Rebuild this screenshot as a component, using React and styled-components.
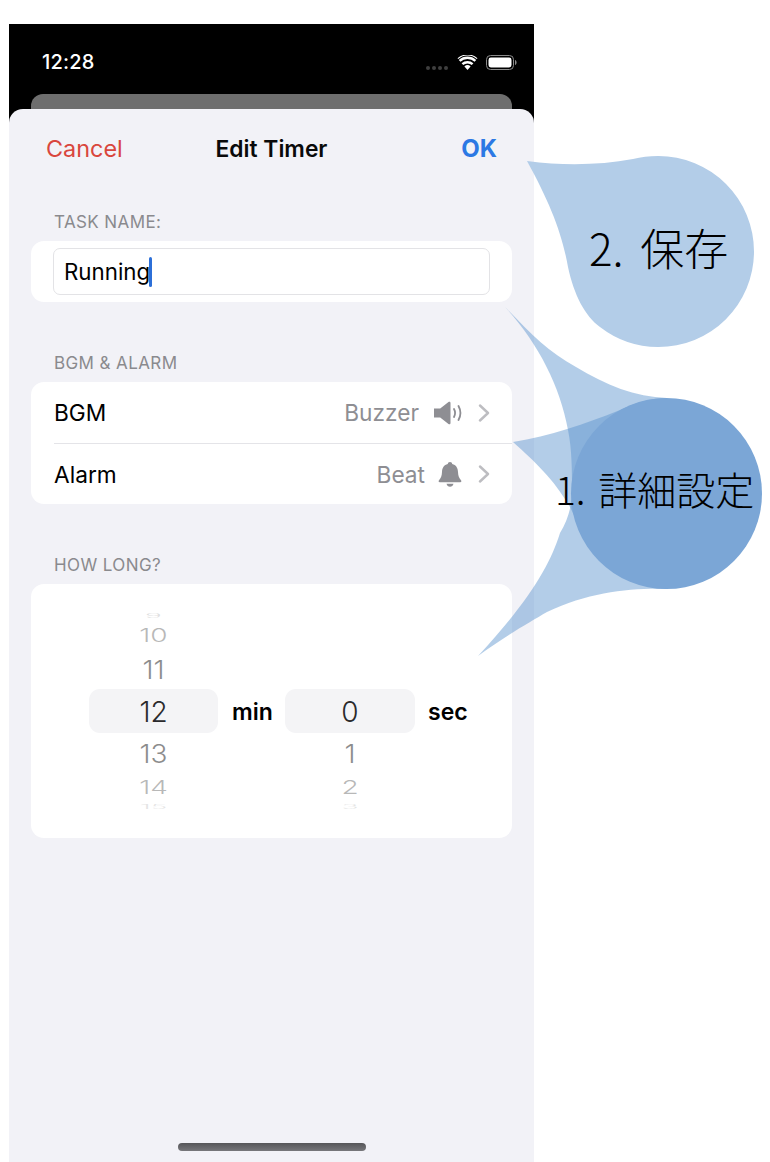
import React from 'react'
import styled, { createGlobalStyle } from 'styled-components'

const GlobalStyle = createGlobalStyle`
    html, body {
        margin: 0;
        padding: 0;
        background: #fff;
    }
    body {
        font-family: Inter, "Noto Sans", sans-serif;
        color: #000;
    }
`

const Page = styled.div`
    position: relative;
    width: 770px;
    height: 1162px;
    padding: 24px 0 0 9px;
    box-sizing: border-box;
    overflow: hidden;
`

const Phone = styled.div`
    width: 525px;
    height: 1138px;
    background: #000;
    display: flex;
    flex-direction: column;
`

const StatusBar = styled.div`
    height: 70px;
    flex: none;
    padding: 6px 17px 0 33px;
    box-sizing: border-box;
    display: flex;
    align-items: center;
    color: #fff;
`

const Time = styled.div`
    font-size: 20px;
    font-weight: 500;
    letter-spacing: 0.2px;
    margin-right: auto;
`

const Dots = styled.div`
    display: flex;
    gap: 2px;
    margin: 11px 9px 0 0;
`

const Dot = styled.span`
    width: 4px;
    height: 4px;
    border-radius: 50%;
    background: #3f3f3f;
`

const BackCard = styled.div`
    height: 15px;
    flex: none;
    margin: 0 22px;
    background: #6e6e6e;
    border-radius: 12px 12px 0 0;
`

const Sheet = styled.div`
    flex: 1;
    background: #f2f2f7;
    border-radius: 14px 14px 0 0;
    display: flex;
    flex-direction: column;
    padding: 0 22px;
`

const Header = styled.div`
    height: 78px;
    flex: none;
    display: grid;
    grid-template-columns: 1fr auto 1fr;
    align-items: center;
    padding: 0 15px;
`

const Cancel = styled.div`
    font-size: 23.4px;
    color: #d9463d;
`

const Title = styled.div`
    font-size: 22.8px;
    font-weight: 600;
    color: #0a0a0a;
`

const Ok = styled.div`
    font-size: 24px;
    font-weight: 700;
    color: #2c79e4;
    text-align: right;
`

const SectionLabel = styled.div`
    height: 20px;
    line-height: 22px;
    padding-left: 23px;
    margin: ${props => props.$top}px 0 10px;
    font-size: 17px;
    color: #8a8a8e;
    letter-spacing: 0.4px;
`

const Card = styled.div`
    background: #fff;
    border-radius: 13px;
`

const InputCard = styled(Card)`
    height: 61px;
    padding: 7px 22px;
    box-sizing: border-box;
`

const Input = styled.div`
    height: 47px;
    border: 1px solid #e3e3e6;
    border-radius: 7px;
    box-sizing: border-box;
    padding-left: 10px;
    display: flex;
    align-items: center;
    font-size: 22.3px;
`

const Caret = styled.span`
    width: 3px;
    height: 30px;
    margin-left: -1px;
    border-radius: 1.5px;
    background: #2c6fd8;
`

const Row = styled.div`
    height: 61px;
    margin-left: 23px;
    padding-right: 22px;
    box-sizing: border-box;
    display: flex;
    align-items: center;
    font-size: 22.7px;
    border-top: ${props => (props.$divided ? '1px solid #e4e4e8' : 'none')};
`

const RowName = styled.div`
    margin-right: auto;
`

const RowValue = styled.div`
    color: #8e8e93;
    margin-right: ${props => props.$gap}px;
`

const RowIcon = styled.svg`
    display: block;
    margin-right: 16px;
`

const PickerCard = styled(Card)`
    height: 254px;
    padding: 25px 0 0 58px;
    box-sizing: border-box;
    display: grid;
    grid-template-columns: 129px 67px 130px auto;
    grid-template-rows: 204px;
`

const Wheel = styled.div`
    display: flex;
    flex-direction: column;
`

const WheelItem = styled.div`
    height: ${props => props.$height}px;
    flex: none;
    display: flex;
    align-items: center;
    justify-content: center;
    overflow: hidden;
    font-size: 28px;
    border-radius: 11px;
    background: ${props => (props.$selected ? '#f4f4f6' : 'transparent')};
    color: ${props => (props.$selected ? '#2a2a2c' : '#000')};
`

const WheelText = styled.span`
    display: block;
    font-weight: 300;
    transform: translateY(${props => props.$shift || 0}px) scaleY(${props => props.$squash});
    opacity: ${props => props.$fade};
`

const Unit = styled.div`
    align-self: center;
    margin-top: 2px;
    padding-left: ${props => props.$indent}px;
    font-size: 23px;
    font-weight: 600;
`

const HomeBar = styled.div`
    margin: auto 0 11px 147px;
    width: 188px;
    height: 8px;
    border-radius: 4px;
    background: linear-gradient(#565659, #77777b);
`

const CalloutLayer = styled.svg`
    position: absolute;
    left: 0;
    top: 0;
    pointer-events: none;
`

const CalloutText = styled.div`
    position: absolute;
    left: ${props => props.$left}px;
    top: ${props => props.$top}px;
    font-family: "Noto Sans CJK JP", sans-serif;
    font-weight: 300;
    font-size: ${props => props.$size}px;
    word-spacing: ${props => props.$wordGap}px;
    line-height: 1;
    white-space: nowrap;
    color: #000;
`

const minutes = [
    { text: '9', height: 14, squash: 0.2, fade: 0.12 },
    { text: '10', height: 24, squash: 0.66, fade: 0.28 },
    { text: '11', height: 42, squash: 0.92, fade: 0.45, shift: 1.5 },
    { text: '12', height: 44, squash: 1, fade: 1, selected: true, shift: 1 },
    { text: '13', height: 41, squash: 0.92, fade: 0.45 },
    { text: '14', height: 26, squash: 0.66, fade: 0.28 },
    { text: '15', height: 13, squash: 0.2, fade: 0.1 },
]

const seconds = [
    { text: '', height: 14, squash: 1, fade: 0 },
    { text: '', height: 24, squash: 1, fade: 0 },
    { text: '', height: 42, squash: 1, fade: 0 },
    { text: '0', height: 44, squash: 1, fade: 1, selected: true, shift: 1 },
    { text: '1', height: 41, squash: 0.92, fade: 0.45 },
    { text: '2', height: 26, squash: 0.66, fade: 0.28 },
    { text: '3', height: 13, squash: 0.2, fade: 0.1 },
]

const WheelColumn = ({ items }) => (
    <Wheel>
        {items.map((item, i) => (
            <WheelItem key={i} $height={item.height} $selected={item.selected}>
                <WheelText $squash={item.squash} $fade={item.fade} $shift={item.shift}>{item.text}</WheelText>
            </WheelItem>
        ))}
    </Wheel>
)

const Wifi = () => (
    <svg width="21" height="15" viewBox="0 0 21 15" style={{ marginRight: 8 }}>
        <path d="M10.5 15 7.4 11.4a4.6 4.6 0 0 1 6.2 0Z" fill="#fff" />
        <path d="M5.4 9.2a7.6 7.6 0 0 1 10.2 0M2.6 5.9a11.6 11.6 0 0 1 15.8 0" fill="none" stroke="#fff" strokeWidth="2.4" />
        <path d="M0.9 3.6a14.6 14.6 0 0 1 19.2 0" fill="none" stroke="#fff" strokeWidth="1.2" />
    </svg>
)

const Battery = () => (
    <svg width="31" height="15" viewBox="0 0 31 15">
        <rect x="0.5" y="0.5" width="27" height="14" rx="4" fill="none" stroke="#8a8a8a" />
        <rect x="2.5" y="2.5" width="23" height="10" rx="2.4" fill="#fff" />
        <path d="M29 5v5c1-.3 1.6-1.4 1.6-2.5S30 5.300 29 5Z" fill="#8a8a8a" />
    </svg>
)

const Speaker = () => (
    <RowIcon width="28" height="24" viewBox="0 0 28 24">
        <path d="M0 7.500h6.200L14.500 1c1-.7 2-.2 2 1v20c0 1.200-1 1.700-2 1l-8.300-6.500H0Z" fill="#8e8e93" />
        <path d="M20 8c1.300 2.400 1.300 5.600 0 8M24.500 5c2.400 4.300 2.400 9.700 0 14" fill="none" stroke="#8e8e93" strokeWidth="1.800" strokeLinecap="round" />
    </RowIcon>
)

const Bell = () => (
    <RowIcon width="24" height="25" viewBox="0 0 24 25">
        <path d="M12 0c1.300 0 2.200.9 2.200 2.100C18 3 19.800 6 20 10c.2 4 1 6 3 8.200.8.900.4 2-.8 2H1.800C.6 20.200.2 19.100 1 18.200 3 16 3.800 14 4 10c.2-4 2-7 5.800-7.900C9.800.9 10.700 0 12 0Z" fill="#8e8e93" />
        <path d="M8.500 21.800h7c-.4 1.800-1.800 3-3.500 3s-3.100-1.200-3.500-3Z" fill="#8e8e93" />
    </RowIcon>
)

const Chevron = () => (
    <svg width="12" height="18" viewBox="0 0 12 18">
        <path d="M2 1.500 10 9l-8 7.500" fill="none" stroke="#bdbdc1" strokeWidth="2.400" strokeLinecap="round" strokeLinejoin="round" />
    </svg>
)

// speech-bubble blobs laid over the screenshot, the tails meet under the solid circle
const Callouts = () => (
    <CalloutLayer width="770" height="1162" viewBox="0 0 770 1162">
        <path
            d="M527 161C565 166 600 165 633 159C641 157 649 156 658 156A95.500 95.500 0 0 1 754 252A95.500 95.500 0 0 1 658 347A95.500 95.500 0 0 1 600 327C585 316 574 295 568 267C562 233 550 203 527 161Z"
            fill="#b3cde8"
        />
        <g fill="#5690cc" fillOpacity="0.45">
            <path d="M505 307C530 333 548 352 576 367C606 385 635 397 667 398L667 493L572 493C572 470 572 450 568 430C560 385 537 342 505 307Z" />
            <path d="M513 442C550 436 585 424 620 410C635 403 650 398 667 398L667 589C640 585 610 575 597 553C585 540 578 523 570 507C553 478 535 462 513 442Z" />
            <path d="M478 656C505 636 530 622 547 612C590 592 630 588 667 589L667 493L572 493C572 505 568 520 560 533C550 565 530 600 478 656Z" />
        </g>
        <circle cx="666.500" cy="493.500" r="95.500" fill="#7ba6d6" />
    </CalloutLayer>
)

const App = () => {
    return (
        <Page>
            <GlobalStyle />
            <Phone>
                <StatusBar>
                    <Time>12:28</Time>
                    <Dots>
                        <Dot /><Dot /><Dot /><Dot />
                    </Dots>
                    <Wifi />
                    <Battery />
                </StatusBar>
                <BackCard />
                <Sheet>
                    <Header>
                        <Cancel>Cancel</Cancel>
                        <Title>Edit Timer</Title>
                        <Ok>OK</Ok>
                    </Header>
                    <SectionLabel $top={24}>TASK NAME:</SectionLabel>
                    <InputCard>
                        <Input>Running<Caret /></Input>
                    </InputCard>
                    <SectionLabel $top={50}>BGM &amp; ALARM</SectionLabel>
                    <Card>
                        <Row>
                            <RowName>BGM</RowName>
                            <RowValue $gap={15}>Buzzer</RowValue>
                            <Speaker />
                            <Chevron />
                        </Row>
                        <Row $divided>
                            <RowName>Alarm</RowName>
                            <RowValue $gap={13}>Beat</RowValue>
                            <Bell />
                            <Chevron />
                        </Row>
                    </Card>
                    <SectionLabel $top={50}>HOW LONG?</SectionLabel>
                    <PickerCard>
                        <WheelColumn items={minutes} />
                        <Unit $indent={14}>min</Unit>
                        <WheelColumn items={seconds} />
                        <Unit $indent={13}>sec</Unit>
                    </PickerCard>
                    <HomeBar />
                </Sheet>
            </Phone>
            <Callouts />
            <CalloutText $left={589} $top={225} $size={44} $wordGap={7}>2. 保存</CalloutText>
            <CalloutText $left={555} $top={469} $size={39} $wordGap={4}>1. 詳細設定</CalloutText>
        </Page>
    )
}

export default App
